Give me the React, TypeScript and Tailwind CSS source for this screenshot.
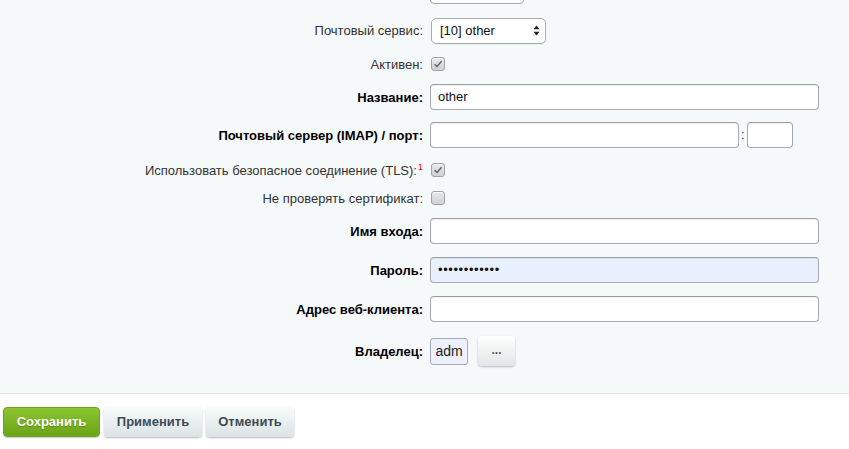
import React from 'react'

function Label({ text, bold = false, note = false }: { text: string; bold?: boolean; note?: boolean }) {
  return (
    <div
      className={`w-[424px] shrink-0 pr-[1px] text-right text-[13px] leading-none ${
        bold ? 'font-bold text-[#000]' : 'text-[#333]'
      }`}
    >
      {text}
      {note && <sup className="ml-[1px] text-[9px] font-normal text-[#e00]">1</sup>}
    </div>
  )
}

function TextBox({ value = '', width = 'w-[389px]', filled = false, password = false }: { value?: string; width?: string; filled?: boolean; password?: boolean }) {
  return (
    <div
      className={`flex h-[26px] ${width} items-center rounded-[4px] border border-[#a4a9ab] border-t-[#9a9fa1] px-[7px] text-[13px] shadow-[inset_0_1px_1px_rgba(0,0,0,0.06)] ${
        filled ? 'bg-[#e8f0fe]' : 'bg-white'
      }`}
    >
      {password ? <span className="tracking-[0.6px] text-[13px] text-[#111]">••••••••••••</span> : <span className="text-[#111]">{value}</span>}
    </div>
  )
}

function CheckBox({ checked }: { checked: boolean }) {
  return (
    <div className="ml-[1px] flex h-[14px] w-[14px] items-center justify-center rounded-[3px] border border-[#9ea4a6] bg-gradient-to-b from-[#e7eaea] to-[#ccd2d3] shadow-[inset_0_1px_0_rgba(255,255,255,0.6)]">
      {checked && (
        <svg width="10" height="10" viewBox="0 0 10 10">
          <path d="M1.6 5.2 L4 7.5 L8.6 2.3" fill="none" stroke="#59636a" strokeWidth="1.4" />
        </svg>
      )}
    </div>
  )
}

function Row({ h, children }: { h: string; children: React.ReactNode }) {
  return <div className={`flex ${h} items-center gap-[6px]`}>{children}</div>
}

export default function App() {
  return (
    <div className="h-[449px] w-[849px] overflow-hidden bg-white font-['Liberation_Sans',Arial,sans-serif]">
      <div className="border-b border-[#dfe6e6] bg-[#f5f9f9] pb-[18px]">
        <div className="-mt-[22px]">
          {/* clipped row above */}
          <Row h="h-[26px]">
            <div className="w-[424px] shrink-0" />
            <div className="h-[26px] w-[94px] rounded-[4px] border border-[#a4a9ab] bg-white" />
          </Row>
          <div className="h-[10px]" />
          <Row h="h-[33px]">
            <Label text="Почтовый сервис:" />
            <div className="ml-[1px] flex h-[26px] w-[115px] items-center justify-between rounded-[5px] border border-[#a9acae] bg-white pl-[8px] pr-[5px] text-[13px] text-[#111] shadow-[0_1px_1px_rgba(0,0,0,0.05)]">
              <span>[10] other</span>
              <svg width="7" height="11" viewBox="0 0 7 11">
                <path d="M3.5 0.5 L6.5 4.2 L0.5 4.2 Z" fill="#222" />
                <path d="M3.5 10.5 L6.5 6.8 L0.5 6.8 Z" fill="#222" />
              </svg>
            </div>
          </Row>
          <Row h="h-[34px]">
            <Label text="Активен:" />
            <CheckBox checked />
          </Row>
          <Row h="h-[32px]">
            <Label text="Название:" bold />
            <TextBox value="other" />
          </Row>
          <Row h="h-[44px]">
            <Label text="Почтовый сервер (IMAP) / порт:" bold />
            <div className="flex items-center">
              <TextBox width="w-[309px]" />
              <span className="px-[2px] text-[13px] text-[#333]">:</span>
              <TextBox width="w-[46px]" />
            </div>
          </Row>
          <Row h="h-[26px]">
            <Label text="Использовать безопасное соединение (TLS):" note />
            <CheckBox checked />
          </Row>
          <Row h="h-[30px]">
            <Label text="Не проверять сертификат:" />
            <CheckBox checked={false} />
          </Row>
          <Row h="h-[36px]">
            <Label text="Имя входа:" bold />
            <TextBox />
          </Row>
          <Row h="h-[42px]">
            <Label text="Пароль:" bold />
            <TextBox filled password />
          </Row>
          <Row h="h-[36px]">
            <Label text="Адрес веб-клиента:" bold />
            <TextBox />
          </Row>
          <Row h="h-[48px]">
            <Label text="Владелец:" bold />
            <div className="flex items-center gap-[10px]">
              <div className="flex h-[27px] w-[38px] items-center justify-center rounded-[3px] border border-[#a3aac4] bg-[#eef1fb] text-[14px] text-[#222]">
                adm
              </div>
              <div className="flex h-[30px] w-[37px] items-center justify-center rounded-[4px] bg-gradient-to-b from-[#ffffff] to-[#dfe6e7] pb-[3px] text-[12px] font-bold text-[#555] shadow-[0_1px_2px_rgba(0,0,0,0.25)]">
                ...
              </div>
            </div>
          </Row>
        </div>
      </div>
      <div className="flex gap-[4px] pl-[3px] pt-[13px]">
        <button className="flex h-[30px] w-[97px] items-center justify-center rounded-[4px] border border-[#6ea121] bg-gradient-to-b from-[#8bc530] to-[#6aa417] text-[13px] font-bold text-white shadow-[0_1px_1px_rgba(0,0,0,0.2)] [text-shadow:0_1px_1px_rgba(0,0,0,0.25)]">
          Сохранить
        </button>
        <button className="flex h-[30px] w-[98px] items-center justify-center rounded-[4px] bg-gradient-to-b from-[#f8fbfb] to-[#dbe3e4] text-[13px] font-bold text-[#3f4b54] shadow-[0_1px_2px_rgba(0,0,0,0.28)]">
          Применить
        </button>
        <button className="flex h-[30px] w-[88px] items-center justify-center rounded-[4px] bg-gradient-to-b from-[#f8fbfb] to-[#dbe3e4] text-[13px] font-bold text-[#3f4b54] shadow-[0_1px_2px_rgba(0,0,0,0.28)]">
          Отменить
        </button>
      </div>
    </div>
  )
}
